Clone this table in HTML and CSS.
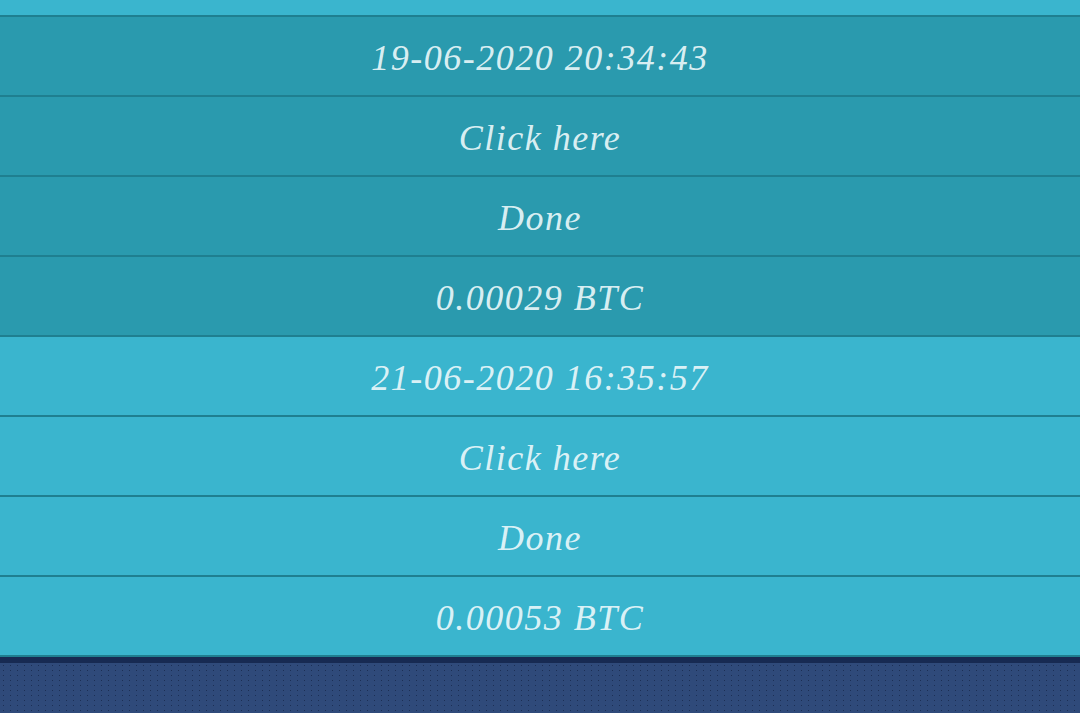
FILE: index.html
```html
<!DOCTYPE html>
<html lang="en">
<head>
    <meta charset="UTF-8">
    <meta name="viewport" content="width=device-width, initial-scale=1.0">
    <title>Withdrawals</title>
    <link rel="stylesheet" href="styles.css">
</head>
<body>
    <div class="history">
        <div class="record-tail"></div>

        <div class="record record-dark">
            <div class="cell">19-06-2020 20:34:43</div>
            <div class="cell"><a href="#">Click here</a></div>
            <div class="cell">Done</div>
            <div class="cell">0.00029 BTC</div>
        </div>

        <div class="record">
            <div class="cell">21-06-2020 16:35:57</div>
            <div class="cell"><a href="#">Click here</a></div>
            <div class="cell">Done</div>
            <div class="cell">0.00053 BTC</div>
        </div>
    </div>

    <footer class="footer"></footer>
</body>
</html>
```

FILE: styles.css
```css
body {
    margin: 0;
    font-family: "Liberation Serif", serif;
    background-color: #2f4a7a;
}
.history {
    background-color: #3ab5ce;
}
.record-tail {
    height: 15px;
    border-bottom: 2px solid #1f7f90;
}
.record {
    background-color: #3ab5ce;
}
.record-dark {
    background-color: #2a9aae;
}
.cell {
    height: 80px;
    box-sizing: border-box;
    padding-top: 3px;
    display: flex;
    align-items: center;
    justify-content: center;
    border-bottom: 2px solid #1f7f90;
    color: rgba(240, 250, 252, 0.9);
    font-size: 36px;
    font-style: italic;
    letter-spacing: 1.5px;
}
.cell a {
    color: inherit;
    text-decoration: none;
}
.footer {
    height: 56px;
    border-top: 6px solid #172a52;
    background-color: #2f4a7a;
    background-image: radial-gradient(circle, rgba(20, 35, 70, 0.7) 0.6px, transparent 1px);
    background-size: 7px 5px;
}
```
